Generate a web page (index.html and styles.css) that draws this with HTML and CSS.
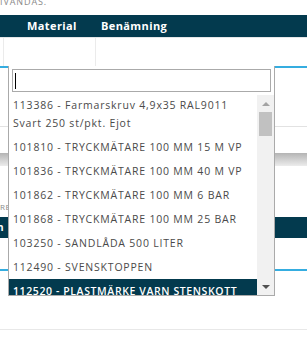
FILE: index.html
```html
<!DOCTYPE html>
<html lang="sv">
<head>
<meta charset="UTF-8">
<meta name="viewport" content="width=device-width, initial-scale=1.0">
<title>Artikelval</title>
<link rel="stylesheet" href="styles.css">
</head>
<body>

<p class="hint">IVANDAS.</p>

<div class="grid">
    <div class="grid-head">
        <div class="col col-check"></div>
        <div class="col col-material">Material</div>
        <div class="col col-name">Benämning</div>
    </div>
    <div class="grid-row">
        <div class="col col-check"></div>
        <div class="col col-material"></div>
        <div class="col col-name"></div>
    </div>
</div>

<div class="panel">
    <div class="panel-top"></div>
    <div class="panel-bar"></div>
    <div class="panel-label">REFERENS</div>
    <div class="panel-head"><span>n</span></div>
    <div class="panel-line"></div>
    <div class="panel-rule"></div>
</div>

<div class="dropdown">
    <div class="search">
        <div class="field"><span class="caret"></span></div>
    </div>
    <div class="results">
        <ul class="options">
            <li>113386 - Farmarskruv 4,9x35 RAL9011 Svart 250 st/pkt. Ejot</li>
            <li>101810 - TRYCKMÄTARE 100 MM 15 M VP</li>
            <li>101836 - TRYCKMÄTARE 100 MM 40 M VP</li>
            <li>101862 - TRYCKMÄTARE 100 MM 6 BAR</li>
            <li>101868 - TRYCKMÄTARE 100 MM 25 BAR</li>
            <li>103250 - SANDLÅDA 500 LITER</li>
            <li>112490 - SVENSKTOPPEN</li>
            <li class="active">112520 - PLASTMÄRKE VARN STENSKOTT</li>
            <li>112530 - PLASTMÄRKE VARN KABEL</li>
        </ul>
        <div class="scrollbar">
            <div class="arrow arrow-up"></div>
            <div class="thumb"></div>
            <div class="track"></div>
            <div class="arrow arrow-down"></div>
        </div>
    </div>
</div>

</body>
</html>
```

FILE: styles.css
```css
body {
    margin: 0;
    font-family: "Open Sans", Arial, sans-serif;
    background: #fff;
    overflow: hidden;
}
.hint {
    margin: -3px 0 0;
    height: 18px;
    font-size: 9px;
    line-height: 9px;
    letter-spacing: 0.9px;
    color: #8a8a8a;
}
.grid-head, .grid-row {
    display: flex;
}
.grid-head {
    height: 22px;
    background: #033a4e;
    color: #fff;
    font-weight: 700;
    font-size: 11px;
    line-height: 22px;
    letter-spacing: 0.4px;
    border-bottom: 1px solid #e3e6e8;
}
.grid-row {
    height: 28px;
}
.col-check {
    width: 3px;
}
.col-material {
    width: 92px;
    padding-left: 24px;
    box-sizing: border-box;
}
.col-name {
    flex: 1;
    padding-left: 6px;
}
.grid-row .col-material, .grid-row .col-name {
    border-left: 1px solid #ebebeb;
}
.panel {
    border-top: 2px solid #35ade0;
}
.panel-top {
    height: 58px;
    border-bottom: 1px solid #e2e2e2;
}
.panel-bar {
    margin-top: 26px;
    height: 13px;
    background: linear-gradient(#b4b4b4, #ececec);
}
.panel-label {
    margin-top: 37px;
    height: 14px;
    font-size: 8px;
    line-height: 8px;
    letter-spacing: 0.6px;
    color: #8a8a8a;
}
.panel-head {
    height: 21px;
    background: #033a4e;
    color: #fff;
    font-size: 10px;
    font-weight: 700;
    line-height: 21px;
}
.panel-head span {
    margin-left: -3px;
}
.panel-line {
    margin-top: 31px;
    border-top: 2px solid #35ade0;
}
.panel-rule {
    margin-top: 58px;
    border-top: 1px solid #e8e8e8;
}

/* open select list, lies over the form */
.dropdown {
    position: absolute;
    left: 8px;
    top: 66px;
    width: 267px;
    box-sizing: border-box;
    background: #fff;
    border: 1px solid #aaa;
    border-top: none;
}
.search {
    padding: 3px 3px 1px;
}
.field {
    height: 23px;
    box-sizing: border-box;
    border: 1px solid #aaa;
    padding: 3px 0 0 2px;
}
.caret {
    display: block;
    width: 1px;
    height: 16px;
    background: #000;
}
.results {
    display: flex;
    height: 202px;
}
.options {
    flex: 1;
    margin: 0;
    padding: 0;
    list-style: none;
    overflow: hidden;
    font-size: 10.5px;
    line-height: 18px;
    letter-spacing: 0.8px;
    color: #4a4a4a;
}
.options li {
    padding: 3px 4px;
}
.options li.active {
    background: #033a4e;
    color: #fff;
    font-weight: 600;
    letter-spacing: 0.6px;
}
.scrollbar {
    width: 17px;
    margin-top: 2px;
    background: #f1f1f1;
    display: flex;
    flex-direction: column;
    align-items: center;
}
.arrow {
    width: 17px;
    height: 17px;
    display: flex;
    align-items: center;
    justify-content: center;
}
.arrow::before {
    content: "";
    border-left: 4px solid transparent;
    border-right: 4px solid transparent;
}
.arrow-up::before {
    border-bottom: 4px solid #a3a3a3;
}
.arrow-down::before {
    border-top: 4px solid #505050;
}
.thumb {
    width: 13px;
    height: 24px;
    background: #c1c1c1;
}
.track {
    flex: 1;
}
```
